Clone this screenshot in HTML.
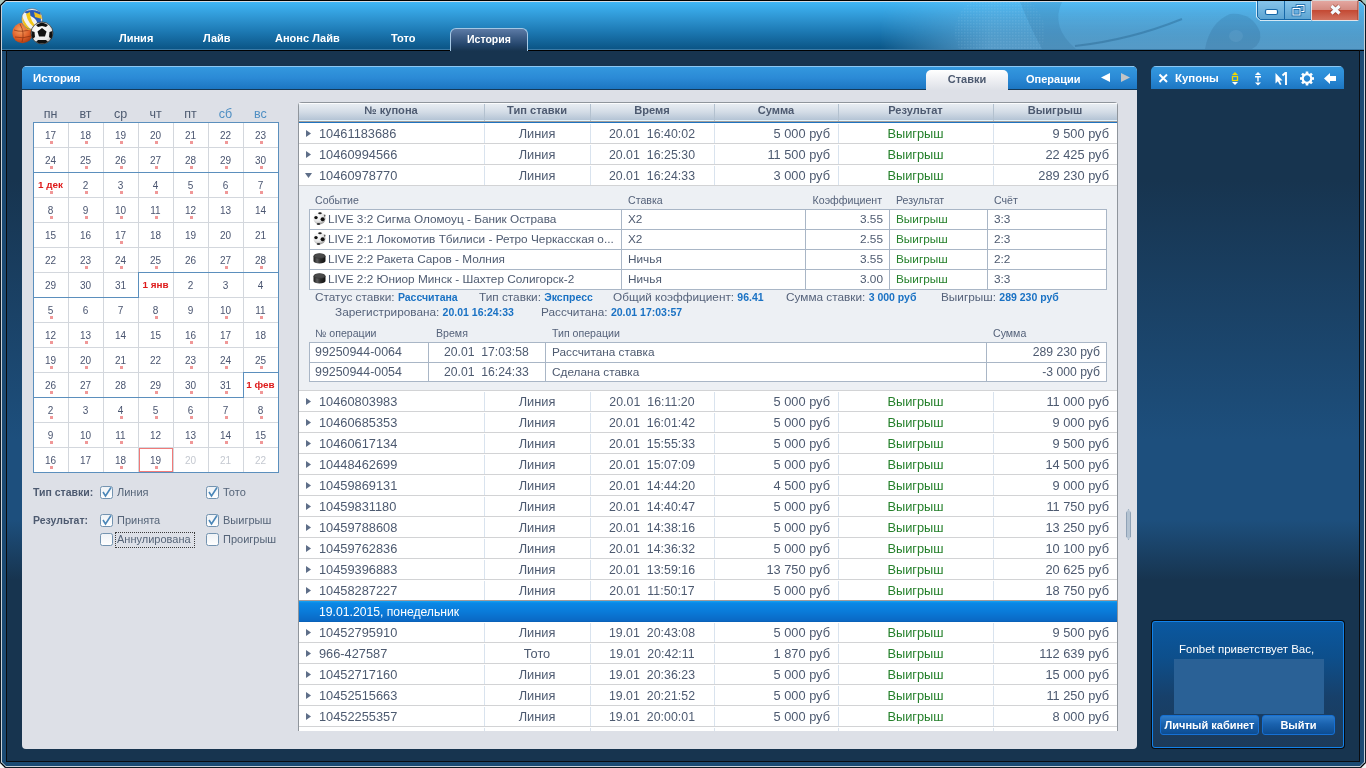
<!DOCTYPE html>
<html><head><meta charset="utf-8">
<style>
*{margin:0;padding:0;box-sizing:border-box}
html,body{-webkit-font-smoothing:antialiased;width:1366px;height:768px;overflow:hidden;background:#0e1a26;font-family:"Liberation Sans",sans-serif}
.a{position:absolute}
#frame{will-change:transform;position:absolute;left:0;top:0;width:1366px;height:768px;background:linear-gradient(#17344f 0,#17344f 180px,#1d4f7d 440px,#1d4f7d 520px,#17344f 580px,#17344f 768px)}
#hdr{position:absolute;left:0;top:0;width:1366px;height:51px;background:linear-gradient(#000 0,#000 1px,#d4dce4 1px,#d4dce4 2px,#3fb6f6 2px,#2e95d2 18px,#1c78b2 32px,#0b5586 49px,#3a7aa6 49px,#3a7aa6 50px,#000 50px,#000 51px)}
.nav{position:absolute;top:32px;font-weight:bold;font-size:11px;color:#fff;line-height:13px}
/* panel */
#panel{position:absolute;left:22px;top:66px;width:1115px;height:683px;background:#dde0e7;border-radius:5px 5px 4px 4px;overflow:hidden}
#ph{position:absolute;left:0;top:0;width:1115px;height:24px;background:linear-gradient(#8cc8f4 0,#8cc8f4 1px,#3398de 1px,#2b8ad6 12px,#1c76c2 23px,#143a5a 23px,#143a5a 24px)}
.ptitle{position:absolute;left:11px;top:6px;font-weight:bold;font-size:11.4px;color:#fff;line-height:13px}
/* calendar */
#cal{position:absolute;left:33px;top:122px;width:246px;height:351px;background:#fff}
.wd{position:absolute;top:107px;width:35px;text-align:center;font-size:12.5px;color:#4d5a70;line-height:14px}
.gv{position:absolute;top:0;width:1px;height:351px;background:#d3d7dd}
.gh{position:absolute;left:0;height:1px;width:246px;background:#d3d7dd}
.cd{position:absolute;width:35px;height:25px;text-align:center;font-size:10px;color:#4a5570;line-height:12px;padding-top:8px}
.cd.m{color:#de1a1a;font-size:9.9px;font-weight:bold;padding-top:7px}
.dt{position:absolute;width:3px;height:3px;background:#f09898}
.bl{position:absolute;background:#5b8fbd}
.lbl{position:absolute;font-weight:bold;font-size:10.5px;color:#4d5a70;line-height:13px}
.cb{position:absolute;width:13px;height:13px;border:1px solid #7f98b0;border-radius:2px;background:linear-gradient(#f4f6f9,#fff)}
.cbt{position:absolute;font-size:11.5px;color:#4d5a70;line-height:13px}

/* tabs */
.tab{position:absolute;left:926px;top:70px;width:82px;height:20px;border-radius:5px 5px 0 0;background:linear-gradient(#ffffff,#dde0e7);text-align:center;font-weight:bold;font-size:11px;color:#4d5a70;line-height:14px;padding-top:2px}
.tab2{position:absolute;left:1026px;top:72px;font-weight:bold;font-size:11px;color:#fff;line-height:14px}
.tri{position:absolute;width:9px;height:9px}
/* main table */
#tb{position:absolute;left:298px;top:102px;width:820px;height:629px;background:#fff;border:1px solid #8f959c;border-bottom:none;border-radius:4px 4px 0 0;overflow:hidden}
#th{position:absolute;left:299px;top:103px;width:818px;height:20px;background:linear-gradient(#fbfcfd 0,#fbfcfd 1px,#e8edf2 1px,#d3dce6 9px,#b4c4d5 17px,#e2f4fc 17px,#e2f4fc 18px,#a29d9a 18px,#a29d9a 19px,#1f74c0 19px,#1f74c0 20px)}
.hs{position:absolute;top:104px;width:1px;height:17px;background:#b3c1cf}
.hc{position:absolute;top:104px;text-align:center;font-weight:bold;font-size:11.1px;color:#4d5a70;line-height:13px}
.r{position:absolute;left:299px;width:818px;height:21px;border-bottom:1px solid #d2d3d5;background:#fff linear-gradient(#d9e3ee,#d9e3ee) no-repeat 185px 1px/1px 19px}
.r::before{content:"";position:absolute;left:0;top:0;width:818px;height:20px;background:linear-gradient(#d9e3ee,#d9e3ee) no-repeat 291px 1px/1px 19px,linear-gradient(#d9e3ee,#d9e3ee) no-repeat 415px 1px/1px 19px,linear-gradient(#d9e3ee,#d9e3ee) no-repeat 539px 1px/1px 19px,linear-gradient(#d9e3ee,#d9e3ee) no-repeat 694px 1px/1px 19px}
.r span{position:absolute;top:4px;font-size:12.8px;color:#4d5a70;line-height:14px;white-space:pre}
.c1{left:20px}
.c2{left:185px;width:106px;text-align:center}
.c3{left:291px;width:124px;text-align:center;font-size:12.3px!important;letter-spacing:.05px}
.c4{left:415px;width:116px;text-align:right}
.r .c5{left:539px;width:155px;text-align:center;color:#25802b}
.c6{left:694px;width:116px;text-align:right}
.ar{position:absolute;left:7px;top:7px;width:5px;height:7px;background:#5e6e88;clip-path:polygon(0 0,100% 50%,0 100%)}
.ad{position:absolute;left:6px;top:8px;width:7px;height:5px;background:#5e6e88;clip-path:polygon(0 0,100% 0,50% 100%)}
#exp{position:absolute;left:299px;top:186px;width:818px;height:205px;background:#edf0f4;border-bottom:1px solid #d2d3d5}
#grp{position:absolute;left:299px;top:600px;width:818px;height:22px;background:linear-gradient(#a39c9c 0,#a39c9c 1px,#14a4f4 1px,#0a88e6 3px,#0a7ad8 12px,#0a68c4 21px,#0a5cae 22px);color:#fff;font-size:12.2px;line-height:14px;padding:5px 0 0 20px}
.eh{position:absolute;font-size:10.6px;color:#55627a;line-height:13px;white-space:pre}
.et{position:absolute;font-size:11.8px;color:#4d5a70;line-height:14px;white-space:pre}
.it{position:absolute;background:#fff;border:1px solid #a9b6c6}
.ih{position:absolute;height:1px;background:#a9b6c6}
.iv{position:absolute;width:1px;background:#a9b6c6}
.sm{position:absolute;font-size:11.8px;color:#55627a;line-height:13px;white-space:pre}
.sm b{color:#1a72c4;font-size:10.5px}
.ball,.puck{position:absolute;width:12px;height:12px}
.ball{border-radius:50%;background:radial-gradient(circle at 50% 50%,#222 0,#222 2px,transparent 2.5px),radial-gradient(circle at 15% 40%,#222 0,#222 1.5px,transparent 2px),radial-gradient(circle at 85% 40%,#222 0,#222 1.5px,transparent 2px),radial-gradient(circle at 50% 95%,#333 0,#333 2px,transparent 2.5px),radial-gradient(circle at 40% 30%,#fff,#ccc);box-shadow:inset 0 0 0 1px #999}
.puck{height:10px;top:0;border-radius:6px/3px;background:linear-gradient(#666 0,#444 3px,#111 5px,#333 10px)}
.sb{position:absolute;left:1126px;top:509px;width:5px;height:31px;background:#b4c3d2;border:1px solid #8fa2b6;clip-path:polygon(50% 0,100% 12%,100% 88%,50% 100%,0 88%,0 12%)}

.ntab{position:absolute;left:450px;top:28px;width:78px;height:23px;border:1px solid #a6c8e4;border-bottom:none;border-radius:6px 6px 0 0;background:linear-gradient(#5c7ba6 0,#3f5f88 8px,#24456b 16px,#17344f 22px);color:#fff;font-weight:bold;font-size:10.5px;line-height:13px;padding:4px 0 0 16px}
.cbm{position:absolute;width:13px;height:13px}
.cbt{position:absolute;font-size:11px;color:#556478;line-height:13px;white-space:pre}
#kb{position:absolute;left:1151px;top:66px;width:193px;height:23px;border-radius:5px 5px 0 0;background:linear-gradient(#8cc8f4 0,#8cc8f4 1px,#3398de 1px,#2b8ad6 12px,#1c76c2 23px)}
.kt{position:absolute;left:1175px;top:72px;font-weight:bold;font-size:11.4px;color:#fff;line-height:13px}
#wb{position:absolute;left:1152px;top:621px;width:192px;height:127px;border:1px solid #1282ea;border-radius:3px;box-shadow:0 0 0 1px #050a10;background:linear-gradient(#0a58a0 0,#0d4f8c 35px,#17406a 75px,#1d3a58 126px)}
.wt{position:absolute;left:1179px;top:643px;font-size:11.5px;color:#fff;line-height:13px;white-space:pre}
.wi{position:absolute;left:1174px;top:659px;width:150px;height:55px;background:#2a6196}
.btn{position:absolute;top:715px;height:20px;border:1px solid #1670d4;border-radius:3px;background:linear-gradient(#2f7dcb 0,#1a62ae 8px,#0b4a8e 19px);color:#fff;font-weight:bold;font-size:11px;line-height:14px;text-align:center;padding-top:2px}
.wbtn{position:absolute;top:1px;height:20px}
</style></head>
<body>
<svg width="0" height="0" style="position:absolute">
  <defs>
    <radialGradient id="bg1" cx=".35" cy=".3" r=".8"><stop offset="0" stop-color="#fff"/><stop offset=".55" stop-color="#e6e6e6"/><stop offset="1" stop-color="#8a8a8a"/></radialGradient>
    <linearGradient id="pk" x1="0" y1="0" x2="1" y2="0"><stop offset="0" stop-color="#1a1a1a"/><stop offset=".3" stop-color="#5a5a5a"/><stop offset=".6" stop-color="#2a2a2a"/><stop offset="1" stop-color="#111"/></linearGradient>
    <symbol id="ball" viewBox="0 0 13 13">
      <circle cx="6.5" cy="6.5" r="6" fill="url(#bg1)"/>
      <circle cx="9.6" cy="7.2" r="2" fill="#111"/>
      <circle cx="3" cy="5.6" r="1.7" fill="#111"/>
      <ellipse cx="7" cy="1.2" rx="1.8" ry="1" fill="#222"/>
      <ellipse cx="5.5" cy="12" rx="1.8" ry=".9" fill="#333"/>
      <ellipse cx="11.8" cy="3.6" rx=".6" ry="1.2" fill="#444"/>
    </symbol>
    <symbol id="puck" viewBox="0 0 13 13">
      <path d="M0.5 4 V9 A6 2.6 0 0 0 12.5 9 V4 Z" fill="url(#pk)"/>
      <ellipse cx="6.5" cy="4" rx="6" ry="2.8" fill="#3a3a3a"/>
      <ellipse cx="6.5" cy="3.8" rx="5" ry="2" fill="#4a4a4a"/>
    </symbol>
  </defs>
</svg>
<div id="frame">
  <div id="hdr"></div>
  <!-- frame borders -->
  <div class="a" style="left:0;top:0;width:1px;height:768px;background:#0e1a26"></div>
  <div class="a" style="left:1px;top:1px;width:1px;height:766px;background:#c8d0d8"></div>
  <div class="a" style="left:2px;top:51px;width:4px;height:715px;background:#1b4a73"></div>
  <div class="a" style="left:6px;top:50px;width:1px;height:712px;background:#0a0c10"></div>
  <div class="a" style="left:1359px;top:50px;width:1px;height:712px;background:#0a0c10"></div>
  <div class="a" style="left:1360px;top:51px;width:4px;height:715px;background:#1b4a73"></div>
  <div class="a" style="left:1364px;top:1px;width:1px;height:766px;background:#c8d0d8"></div>
  <div class="a" style="left:1365px;top:0;width:1px;height:768px;background:#0e1a26"></div>
  <div class="a" style="left:6px;top:761px;width:1354px;height:1px;background:#0a0c10"></div>
  <div class="a" style="left:2px;top:762px;width:1362px;height:4px;background:#1b4a73"></div>
  <div class="a" style="left:1px;top:766px;width:1364px;height:1px;background:#c8d0d8"></div>
  <div class="a" style="left:0;top:767px;width:1366px;height:1px;background:#0e1a26"></div>


  <!-- window corners -->
  <svg class="a" style="left:0;top:0" width="7" height="7"><path d="M0 0 H5.5 L0 5.5Z" fill="#a9c6bd"/><path d="M5.5 0.5 L0.5 5.5" stroke="#000" stroke-width="1.2"/><path d="M6 1.5 L1.5 6" stroke="#c9d5de" stroke-width="1"/></svg>
  <svg class="a" style="left:1359px;top:0" width="7" height="7"><path d="M7 0 H1.5 L7 5.5Z" fill="#a9c6bd"/><path d="M1.5 0.5 L6.5 5.5" stroke="#000" stroke-width="1.2"/><path d="M1 1.5 L5.5 6" stroke="#c9d5de" stroke-width="1"/></svg>
  <svg class="a" style="left:0;top:761px" width="7" height="7"><path d="M0 7 H5.5 L0 1.5Z" fill="#f4f4f4"/><path d="M0.5 1.5 L5.5 6.5" stroke="#000" stroke-width="1.2"/><path d="M1.5 1 L6 5.5" stroke="#c9d5de" stroke-width="1"/></svg>
  <svg class="a" style="left:1359px;top:761px" width="7" height="7"><path d="M7 7 H1.5 L7 1.5Z" fill="#f4f4f4"/><path d="M6.5 1.5 L1.5 6.5" stroke="#000" stroke-width="1.2"/><path d="M5.5 1 L1 5.5" stroke="#c9d5de" stroke-width="1"/></svg>
  <div class="nav" style="left:119px">Линия</div>
  <div class="nav" style="left:203px">Лайв</div>
  <div class="nav" style="left:275px">Анонс Лайв</div>
  <div class="nav" style="left:391px">Тото</div>


  <!-- header overlay (athletes image approximation) -->
  <div class="a" style="left:880px;top:2px;width:484px;height:47px;background:linear-gradient(rgba(150,210,245,.22),rgba(120,188,228,.52) 22px,rgba(108,175,218,.78));-webkit-mask-image:linear-gradient(90deg,transparent 0,#000 110px,#000 484px)"></div>
  <svg class="a" style="left:880px;top:2px" width="484" height="47">
    <defs>
      <radialGradient id="ball" cx=".5" cy=".5" r=".5"><stop offset="0" stop-color="rgba(175,222,250,.18)"/><stop offset=".85" stop-color="rgba(175,222,250,.12)"/><stop offset="1" stop-color="rgba(175,222,250,0)"/></radialGradient>
      <pattern id="dots" width="3" height="3" patternUnits="userSpaceOnUse"><rect width="1.5" height="1.5" fill="rgba(200,235,255,.10)"/></pattern>
    </defs>
    <ellipse cx="245" cy="26" rx="62" ry="46" fill="url(#ball)"/>
    <ellipse cx="120" cy="30" rx="45" ry="40" fill="url(#dots)"/>
    <path d="M195 44 Q250 38 302 17" stroke="rgba(25,80,120,.32)" stroke-width="2" fill="none"/>
    <path d="M140 0 Q150 25 162 47 L196 47 Q170 25 182 0Z" fill="rgba(20,65,105,.12)"/>
    <path d="M325 47 Q330 20 350 12 Q372 10 380 30 Q382 42 372 47Z" fill="rgba(20,65,105,.14)"/>
    <ellipse cx="356" cy="34" rx="7" ry="6" fill="rgba(180,220,245,.10)"/>
  </svg>
  <!-- window buttons -->
  <svg class="a" style="left:1255px;top:0" width="105" height="23">
    <defs>
      <linearGradient id="gb" x1="0" y1="0" x2="0" y2="1"><stop offset="0" stop-color="#86c4ea"/><stop offset="1" stop-color="#5aa2d0"/></linearGradient>
      <linearGradient id="gr" x1="0" y1="0" x2="0" y2="1"><stop offset="0" stop-color="#e4a8a2"/><stop offset=".47" stop-color="#d48a80"/><stop offset=".5" stop-color="#c44a34"/><stop offset="1" stop-color="#d27462"/></linearGradient>
    </defs>
    <path d="M1.5 1 V17 L5 20.5 H56 V1" fill="url(#gb)" stroke="#ffffff" stroke-opacity=".75"/>
    <path d="M2.5 1 V16.5 L5.5 19.5 H56 V1" fill="none" stroke="#1668a8"/>
    <line x1="29.5" y1="1" x2="29.5" y2="20" stroke="#1668a8"/>
    <rect x="56.5" y="0.5" width="47" height="20" rx="1" fill="url(#gr)" stroke="#ffffff" stroke-opacity=".75"/>
    <rect x="102.5" y="1" width="1" height="19" fill="#9a3a2a"/>
    <rect x="10.5" y="9.5" width="12" height="5" rx="1.5" fill="#fff" stroke="#1668a8" stroke-width="1.2"/>
    <rect x="42" y="5.5" width="7" height="6" fill="none" stroke="#1668a8" stroke-width="2.6"/>
    <rect x="42" y="5.5" width="7" height="6" fill="none" stroke="#fff" stroke-width="1"/>
    <rect x="38" y="8.5" width="7" height="6.5" fill="#6aaede" stroke="#1668a8" stroke-width="2.6"/>
    <rect x="38" y="8.5" width="7" height="6.5" fill="none" stroke="#fff" stroke-width="1"/>
    <path d="M76.5 6 L84.5 13.5 M84.5 6 L76.5 13.5" stroke="#8a3a2a" stroke-width="5" stroke-opacity=".6"/>
    <path d="M76.5 6 L84.5 13.5 M84.5 6 L76.5 13.5" stroke="#f4fbff" stroke-width="3.2"/>
  </svg>
  <!-- logo -->
  <svg class="a" style="left:10px;top:6px" width="48" height="40">
    <defs>
      <radialGradient id="bk" cx=".4" cy=".35" r=".7"><stop offset="0" stop-color="#f7a060"/><stop offset=".6" stop-color="#e0602a"/><stop offset="1" stop-color="#a83a10"/></radialGradient>
      <radialGradient id="sc" cx=".4" cy=".35" r=".75"><stop offset="0" stop-color="#ffffff"/><stop offset=".7" stop-color="#e8e8e8"/><stop offset="1" stop-color="#9a9a9a"/></radialGradient>
    </defs>
    <circle cx="12.5" cy="27" r="10.2" fill="url(#bk)"/>
    <path d="M4 24 Q12 27 21 23 M5 31 Q13 33 21 30 M10 18 Q15 27 12 36" stroke="#8a3010" stroke-width=".7" fill="none"/>
    <circle cx="22" cy="13" r="10.5" fill="#f2f2f0"/>
    <path d="M14 6 Q22 2 30 6 Q32 12 30 18 L24 12 Z" fill="#2a5ab8"/>
    <path d="M12 10 Q16 20 22 24 L18 24 Q12 20 12 10 Z" fill="#f0c020"/>
    <path d="M26 12 L32 16 Q31 20 28 22 Z" fill="#2a5ab8"/>
    <path d="M16 8 Q18 18 26 22 L28 22 Q20 16 20 6 Z" fill="#f4c818"/>
    <path d="M24 6 L31 9 L32 13 L25 11 Z" fill="#f0c020"/>
    <circle cx="22" cy="13" r="10.5" fill="none" stroke="#5a6070" stroke-width=".6"/>
    <circle cx="32" cy="27" r="11" fill="url(#sc)" stroke="#333" stroke-width=".8"/>
    <polygon points="32,22 36.5,25.5 35,30.5 29,30.5 27.5,25.5" fill="#111"/>
    <path d="M32 16.5 Q35 17 38 19 L36 21 L32 20 L28 21 L26 19 Q29 17 32 16.5Z" fill="#111"/>
    <path d="M42.5 25 Q43 29 41.5 33 L39 31 L39.5 26Z" fill="#111"/>
    <path d="M21.5 25 Q21 29 22.5 33 L25 31 L24.5 26Z" fill="#111"/>
    <path d="M26 36 Q32 39 38 36 L36 34 H28Z" fill="#111"/>
  </svg>
  <div class="ntab">История</div>

  <!-- KUPONY -->
  <div id="kb"></div>
  <svg class="a" style="left:1157px;top:71px" width="182" height="16">
    <path d="M2.5 3.5 L10 11 M10 3.5 L2.5 11" stroke="#fff" stroke-width="2"/>
    <polygon points="78,1 81,4 75,4" fill="#f0d800"/>
    <rect x="75.5" y="5.5" width="5" height="4" fill="none" stroke="#f0d800" stroke-width="1.3"/>
    <polygon points="78,14 81,11 75,11" fill="#fff"/>
    <polygon points="101,1 104,4 98,4" fill="#fff"/>
    <path d="M98 5.7 H104 M101 5.7 V10.5" stroke="#fff" stroke-width="1.4"/>
    <polygon points="101,14.5 104,11.5 98,11.5" fill="#fff"/>
    <path d="M118.5 2 L118.5 12.5 L120.8 10.3 L123 14 L124.5 13.2 L122.5 9.5 L125.5 9.5 Z" fill="#fff"/>
    <path d="M125.5 4.5 L128.3 2 H129 V14" stroke="#fff" stroke-width="1.9" fill="none"/>
    <g transform="translate(150,7.5)" fill="#fff">
      <circle r="4.3" fill="none" stroke="#fff" stroke-width="2.2"/>
      <g id="tt"><rect x="-1.3" y="-7" width="2.6" height="3"/><rect x="-1.3" y="4" width="2.6" height="3"/><rect x="-7" y="-1.3" width="3" height="2.6"/><rect x="4" y="-1.3" width="3" height="2.6"/></g>
      <use href="#tt" transform="rotate(45)"/>
    </g>
    <path d="M167 7.5 L173 2 V5 H179 V10 H173 V13 Z" fill="#fff"/>
  </svg>
  <div class="kt">Купоны</div>

  <!-- WELCOME -->
  <div id="wb"></div>
  <div class="wt">Fonbet приветствует Вас,</div>
  <div class="wi"></div>
  <div class="btn" style="left:1160px;width:99px">Личный кабинет</div>
  <div class="btn" style="left:1262px;width:73px">Выйти</div>

  <!-- PANEL -->
  <div id="panel">
    <div id="ph"></div>
    <div class="ptitle">История</div>
  </div>

  <!-- CALENDAR -->
  <div class="wd" style="left:33px">пн</div>
  <div class="wd" style="left:68px">вт</div>
  <div class="wd" style="left:103px">ср</div>
  <div class="wd" style="left:138px">чт</div>
  <div class="wd" style="left:173px">пт</div>
  <div class="wd" style="left:208px;color:#4f8fc3">сб</div>
  <div class="wd" style="left:243px;color:#4f8fc3">вс</div>
  <div id="cal">
<div class="gv" style="left:35px"></div>
<div class="gv" style="left:70px"></div>
<div class="gv" style="left:105px"></div>
<div class="gv" style="left:140px"></div>
<div class="gv" style="left:175px"></div>
<div class="gv" style="left:210px"></div>
<div class="gh" style="top:25px"></div>
<div class="gh" style="top:50px"></div>
<div class="gh" style="top:75px"></div>
<div class="gh" style="top:100px"></div>
<div class="gh" style="top:125px"></div>
<div class="gh" style="top:150px"></div>
<div class="gh" style="top:175px"></div>
<div class="gh" style="top:200px"></div>
<div class="gh" style="top:225px"></div>
<div class="gh" style="top:250px"></div>
<div class="gh" style="top:275px"></div>
<div class="gh" style="top:300px"></div>
<div class="gh" style="top:325px"></div>
<div class="cd" style="left:0px;top:0px">17</div>
<div class="dt" style="left:17px;top:19px"></div>
<div class="cd" style="left:35px;top:0px">18</div>
<div class="dt" style="left:52px;top:19px"></div>
<div class="cd" style="left:70px;top:0px">19</div>
<div class="dt" style="left:87px;top:19px"></div>
<div class="cd" style="left:105px;top:0px">20</div>
<div class="dt" style="left:122px;top:19px"></div>
<div class="cd" style="left:140px;top:0px">21</div>
<div class="dt" style="left:157px;top:19px"></div>
<div class="cd" style="left:175px;top:0px">22</div>
<div class="dt" style="left:192px;top:19px"></div>
<div class="cd" style="left:210px;top:0px">23</div>
<div class="dt" style="left:227px;top:19px"></div>
<div class="cd" style="left:0px;top:25px">24</div>
<div class="dt" style="left:17px;top:44px"></div>
<div class="cd" style="left:35px;top:25px">25</div>
<div class="dt" style="left:52px;top:44px"></div>
<div class="cd" style="left:70px;top:25px">26</div>
<div class="dt" style="left:87px;top:44px"></div>
<div class="cd" style="left:105px;top:25px">27</div>
<div class="dt" style="left:122px;top:44px"></div>
<div class="cd" style="left:140px;top:25px">28</div>
<div class="dt" style="left:157px;top:44px"></div>
<div class="cd" style="left:175px;top:25px">29</div>
<div class="dt" style="left:192px;top:44px"></div>
<div class="cd" style="left:210px;top:25px">30</div>
<div class="dt" style="left:227px;top:44px"></div>
<div class="cd m" style="left:0px;top:50px">1 дек</div>
<div class="dt" style="left:17px;top:69px"></div>
<div class="cd" style="left:35px;top:50px">2</div>
<div class="dt" style="left:52px;top:69px"></div>
<div class="cd" style="left:70px;top:50px">3</div>
<div class="dt" style="left:87px;top:69px"></div>
<div class="cd" style="left:105px;top:50px">4</div>
<div class="dt" style="left:122px;top:69px"></div>
<div class="cd" style="left:140px;top:50px">5</div>
<div class="dt" style="left:157px;top:69px"></div>
<div class="cd" style="left:175px;top:50px">6</div>
<div class="dt" style="left:192px;top:69px"></div>
<div class="cd" style="left:210px;top:50px">7</div>
<div class="dt" style="left:227px;top:69px"></div>
<div class="cd" style="left:0px;top:75px">8</div>
<div class="dt" style="left:17px;top:94px"></div>
<div class="cd" style="left:35px;top:75px">9</div>
<div class="dt" style="left:52px;top:94px"></div>
<div class="cd" style="left:70px;top:75px">10</div>
<div class="dt" style="left:87px;top:94px"></div>
<div class="cd" style="left:105px;top:75px">11</div>
<div class="dt" style="left:122px;top:94px"></div>
<div class="cd" style="left:140px;top:75px">12</div>
<div class="dt" style="left:157px;top:94px"></div>
<div class="cd" style="left:175px;top:75px">13</div>
<div class="cd" style="left:210px;top:75px">14</div>
<div class="cd" style="left:0px;top:100px">15</div>
<div class="cd" style="left:35px;top:100px">16</div>
<div class="cd" style="left:70px;top:100px">17</div>
<div class="dt" style="left:87px;top:119px"></div>
<div class="cd" style="left:105px;top:100px">18</div>
<div class="cd" style="left:140px;top:100px">19</div>
<div class="cd" style="left:175px;top:100px">20</div>
<div class="cd" style="left:210px;top:100px">21</div>
<div class="cd" style="left:0px;top:125px">22</div>
<div class="cd" style="left:35px;top:125px">23</div>
<div class="dt" style="left:52px;top:144px"></div>
<div class="cd" style="left:70px;top:125px">24</div>
<div class="dt" style="left:87px;top:144px"></div>
<div class="cd" style="left:105px;top:125px">25</div>
<div class="dt" style="left:122px;top:144px"></div>
<div class="cd" style="left:140px;top:125px">26</div>
<div class="cd" style="left:175px;top:125px">27</div>
<div class="dt" style="left:192px;top:144px"></div>
<div class="cd" style="left:210px;top:125px">28</div>
<div class="dt" style="left:227px;top:144px"></div>
<div class="cd" style="left:0px;top:150px">29</div>
<div class="cd" style="left:35px;top:150px">30</div>
<div class="cd" style="left:70px;top:150px">31</div>
<div class="cd m" style="left:105px;top:150px">1 янв</div>
<div class="cd" style="left:140px;top:150px">2</div>
<div class="cd" style="left:175px;top:150px">3</div>
<div class="cd" style="left:210px;top:150px">4</div>
<div class="cd" style="left:0px;top:175px">5</div>
<div class="dt" style="left:17px;top:194px"></div>
<div class="cd" style="left:35px;top:175px">6</div>
<div class="cd" style="left:70px;top:175px">7</div>
<div class="cd" style="left:105px;top:175px">8</div>
<div class="dt" style="left:122px;top:194px"></div>
<div class="cd" style="left:140px;top:175px">9</div>
<div class="cd" style="left:175px;top:175px">10</div>
<div class="dt" style="left:192px;top:194px"></div>
<div class="cd" style="left:210px;top:175px">11</div>
<div class="dt" style="left:227px;top:194px"></div>
<div class="cd" style="left:0px;top:200px">12</div>
<div class="dt" style="left:17px;top:219px"></div>
<div class="cd" style="left:35px;top:200px">13</div>
<div class="dt" style="left:52px;top:219px"></div>
<div class="cd" style="left:70px;top:200px">14</div>
<div class="cd" style="left:105px;top:200px">15</div>
<div class="cd" style="left:140px;top:200px">16</div>
<div class="dt" style="left:157px;top:219px"></div>
<div class="cd" style="left:175px;top:200px">17</div>
<div class="dt" style="left:192px;top:219px"></div>
<div class="cd" style="left:210px;top:200px">18</div>
<div class="cd" style="left:0px;top:225px">19</div>
<div class="dt" style="left:17px;top:244px"></div>
<div class="cd" style="left:35px;top:225px">20</div>
<div class="dt" style="left:52px;top:244px"></div>
<div class="cd" style="left:70px;top:225px">21</div>
<div class="dt" style="left:87px;top:244px"></div>
<div class="cd" style="left:105px;top:225px">22</div>
<div class="cd" style="left:140px;top:225px">23</div>
<div class="dt" style="left:157px;top:244px"></div>
<div class="cd" style="left:175px;top:225px">24</div>
<div class="dt" style="left:192px;top:244px"></div>
<div class="cd" style="left:210px;top:225px">25</div>
<div class="dt" style="left:227px;top:244px"></div>
<div class="cd" style="left:0px;top:250px">26</div>
<div class="dt" style="left:17px;top:269px"></div>
<div class="cd" style="left:35px;top:250px">27</div>
<div class="dt" style="left:52px;top:269px"></div>
<div class="cd" style="left:70px;top:250px">28</div>
<div class="cd" style="left:105px;top:250px">29</div>
<div class="dt" style="left:122px;top:269px"></div>
<div class="cd" style="left:140px;top:250px">30</div>
<div class="dt" style="left:157px;top:269px"></div>
<div class="cd" style="left:175px;top:250px">31</div>
<div class="dt" style="left:192px;top:269px"></div>
<div class="cd m" style="left:210px;top:250px">1 фев</div>
<div class="dt" style="left:227px;top:269px"></div>
<div class="cd" style="left:0px;top:275px">2</div>
<div class="dt" style="left:17px;top:294px"></div>
<div class="cd" style="left:35px;top:275px">3</div>
<div class="cd" style="left:70px;top:275px">4</div>
<div class="dt" style="left:87px;top:294px"></div>
<div class="cd" style="left:105px;top:275px">5</div>
<div class="dt" style="left:122px;top:294px"></div>
<div class="cd" style="left:140px;top:275px">6</div>
<div class="dt" style="left:157px;top:294px"></div>
<div class="cd" style="left:175px;top:275px">7</div>
<div class="dt" style="left:192px;top:294px"></div>
<div class="cd" style="left:210px;top:275px">8</div>
<div class="dt" style="left:227px;top:294px"></div>
<div class="cd" style="left:0px;top:300px">9</div>
<div class="dt" style="left:17px;top:319px"></div>
<div class="cd" style="left:35px;top:300px">10</div>
<div class="dt" style="left:52px;top:319px"></div>
<div class="cd" style="left:70px;top:300px">11</div>
<div class="dt" style="left:87px;top:319px"></div>
<div class="cd" style="left:105px;top:300px">12</div>
<div class="cd" style="left:140px;top:300px">13</div>
<div class="dt" style="left:157px;top:319px"></div>
<div class="cd" style="left:175px;top:300px">14</div>
<div class="dt" style="left:192px;top:319px"></div>
<div class="cd" style="left:210px;top:300px">15</div>
<div class="dt" style="left:227px;top:319px"></div>
<div class="cd" style="left:0px;top:325px">16</div>
<div class="dt" style="left:17px;top:344px"></div>
<div class="cd" style="left:35px;top:325px">17</div>
<div class="cd" style="left:70px;top:325px">18</div>
<div class="dt" style="left:87px;top:344px"></div>
<div class="cd" style="left:105px;top:325px">19</div>
<div class="dt" style="left:122px;top:344px"></div>
<div class="cd" style="left:140px;top:325px;color:#c4c8d0">20</div>
<div class="cd" style="left:175px;top:325px;color:#c4c8d0">21</div>
<div class="cd" style="left:210px;top:325px;color:#c4c8d0">22</div>
<div class="bl" style="left:0px;top:0px;width:246px;height:1px"></div>
<div class="bl" style="left:0px;top:350px;width:246px;height:1px"></div>
<div class="bl" style="left:0px;top:0px;width:1px;height:351px"></div>
<div class="bl" style="left:245px;top:0px;width:1px;height:351px"></div>
<div class="bl" style="left:0px;top:50px;width:246px;height:1px"></div>
<div class="bl" style="left:105px;top:150px;width:141px;height:1px"></div>
<div class="bl" style="left:105px;top:150px;width:1px;height:25px"></div>
<div class="bl" style="left:0px;top:175px;width:106px;height:1px"></div>
<div class="bl" style="left:210px;top:250px;width:36px;height:1px"></div>
<div class="bl" style="left:210px;top:250px;width:1px;height:25px"></div>
<div class="bl" style="left:0px;top:275px;width:211px;height:1px"></div>
<div class="a" style="left:106px;top:326px;width:34px;height:24px;border:1px solid #f07a78"></div>
  </div>


  <!-- TABS -->
  <div class="tab">Ставки</div>
  <div class="tab2">Операции</div>
  <svg class="a" style="left:1101px;top:73px" width="10" height="10"><polygon points="0,4.5 9,0 9,9" fill="#fff"/></svg>
  <svg class="a" style="left:1121px;top:73px" width="10" height="10"><polygon points="0,0 9,4.5 0,9" fill="#c2c4c6"/></svg>

  <!-- TABLE -->
  <div id="tb"></div>
  <div id="th"></div>
  <div class="hs" style="left:484px"></div>
  <div class="hs" style="left:590px"></div>
  <div class="hs" style="left:714px"></div>
  <div class="hs" style="left:838px"></div>
  <div class="hs" style="left:993px"></div>
  <div class="hc" style="left:298px;width:186px">№ купона</div>
  <div class="hc" style="left:484px;width:106px">Тип ставки</div>
  <div class="hc" style="left:590px;width:124px">Время</div>
  <div class="hc" style="left:714px;width:124px">Сумма</div>
  <div class="hc" style="left:838px;width:155px">Результат</div>
  <div class="hc" style="left:993px;width:124px">Выигрыш</div>
  <div class="a" style="left:299px;top:123px;width:818px;height:608px;overflow:hidden">
    <div class="a" style="left:-299px;top:-123px;width:1366px;height:768px">
<div class="r" style="top:123px">
<i class="ar"></i>
<span class="c1">10461183686</span><span class="c2">Линия</span><span class="c3">20.01  16:40:02</span><span class="c4">5 000 руб</span><span class="c5">Выигрыш</span><span class="c6">9 500 руб</span>
</div>
<div class="r" style="top:144px">
<i class="ar"></i>
<span class="c1">10460994566</span><span class="c2">Линия</span><span class="c3">20.01  16:25:30</span><span class="c4">11 500 руб</span><span class="c5">Выигрыш</span><span class="c6">22 425 руб</span>
</div>
<div class="r" style="top:165px">
<i class="ad"></i>
<span class="c1">10460978770</span><span class="c2">Линия</span><span class="c3">20.01  16:24:33</span><span class="c4">3 000 руб</span><span class="c5">Выигрыш</span><span class="c6">289 230 руб</span>
</div>
<div id="exp"></div>
<div class="r" style="top:391px">
<i class="ar"></i>
<span class="c1">10460803983</span><span class="c2">Линия</span><span class="c3">20.01  16:11:20</span><span class="c4">5 000 руб</span><span class="c5">Выигрыш</span><span class="c6">11 000 руб</span>
</div>
<div class="r" style="top:412px">
<i class="ar"></i>
<span class="c1">10460685353</span><span class="c2">Линия</span><span class="c3">20.01  16:01:42</span><span class="c4">5 000 руб</span><span class="c5">Выигрыш</span><span class="c6">9 000 руб</span>
</div>
<div class="r" style="top:433px">
<i class="ar"></i>
<span class="c1">10460617134</span><span class="c2">Линия</span><span class="c3">20.01  15:55:33</span><span class="c4">5 000 руб</span><span class="c5">Выигрыш</span><span class="c6">9 500 руб</span>
</div>
<div class="r" style="top:454px">
<i class="ar"></i>
<span class="c1">10448462699</span><span class="c2">Линия</span><span class="c3">20.01  15:07:09</span><span class="c4">5 000 руб</span><span class="c5">Выигрыш</span><span class="c6">14 500 руб</span>
</div>
<div class="r" style="top:475px">
<i class="ar"></i>
<span class="c1">10459869131</span><span class="c2">Линия</span><span class="c3">20.01  14:44:20</span><span class="c4">4 500 руб</span><span class="c5">Выигрыш</span><span class="c6">9 000 руб</span>
</div>
<div class="r" style="top:496px">
<i class="ar"></i>
<span class="c1">10459831180</span><span class="c2">Линия</span><span class="c3">20.01  14:40:47</span><span class="c4">5 000 руб</span><span class="c5">Выигрыш</span><span class="c6">11 750 руб</span>
</div>
<div class="r" style="top:517px">
<i class="ar"></i>
<span class="c1">10459788608</span><span class="c2">Линия</span><span class="c3">20.01  14:38:16</span><span class="c4">5 000 руб</span><span class="c5">Выигрыш</span><span class="c6">13 250 руб</span>
</div>
<div class="r" style="top:538px">
<i class="ar"></i>
<span class="c1">10459762836</span><span class="c2">Линия</span><span class="c3">20.01  14:36:32</span><span class="c4">5 000 руб</span><span class="c5">Выигрыш</span><span class="c6">10 100 руб</span>
</div>
<div class="r" style="top:559px">
<i class="ar"></i>
<span class="c1">10459396883</span><span class="c2">Линия</span><span class="c3">20.01  13:59:16</span><span class="c4">13 750 руб</span><span class="c5">Выигрыш</span><span class="c6">20 625 руб</span>
</div>
<div class="r" style="top:580px">
<i class="ar"></i>
<span class="c1">10458287227</span><span class="c2">Линия</span><span class="c3">20.01  11:50:17</span><span class="c4">5 000 руб</span><span class="c5">Выигрыш</span><span class="c6">18 750 руб</span>
</div>
<div id="grp">19.01.2015, понедельник</div>
<div class="r" style="top:622px">
<i class="ar"></i>
<span class="c1">10452795910</span><span class="c2">Линия</span><span class="c3">19.01  20:43:08</span><span class="c4">5 000 руб</span><span class="c5">Выигрыш</span><span class="c6">9 500 руб</span>
</div>
<div class="r" style="top:643px">
<i class="ar"></i>
<span class="c1">966-427587</span><span class="c2">Тото</span><span class="c3">19.01  20:42:11</span><span class="c4">1 870 руб</span><span class="c5">Выигрыш</span><span class="c6">112 639 руб</span>
</div>
<div class="r" style="top:664px">
<i class="ar"></i>
<span class="c1">10452717160</span><span class="c2">Линия</span><span class="c3">19.01  20:36:23</span><span class="c4">5 000 руб</span><span class="c5">Выигрыш</span><span class="c6">15 000 руб</span>
</div>
<div class="r" style="top:685px">
<i class="ar"></i>
<span class="c1">10452515663</span><span class="c2">Линия</span><span class="c3">19.01  20:21:52</span><span class="c4">5 000 руб</span><span class="c5">Выигрыш</span><span class="c6">11 250 руб</span>
</div>
<div class="r" style="top:706px">
<i class="ar"></i>
<span class="c1">10452255357</span><span class="c2">Линия</span><span class="c3">19.01  20:00:01</span><span class="c4">5 000 руб</span><span class="c5">Выигрыш</span><span class="c6">8 000 руб</span>
</div>
<div class="r" style="top:727px">
</div>
<div class="eh" style="left:315px;top:194px">Событие</div>
<div class="eh" style="left:628px;top:194px">Ставка</div>
<div class="eh" style="left:800px;top:194px;width:82px;text-align:right">Коэффициент</div>
<div class="eh" style="left:896px;top:194px">Результат</div>
<div class="eh" style="left:994px;top:194px">Счёт</div>
<div class="it" style="left:309px;top:209px;width:798px;height:81px"></div>
<div class="ih" style="left:309px;top:229px;width:798px"></div>
<div class="ih" style="left:309px;top:249px;width:798px"></div>
<div class="ih" style="left:309px;top:269px;width:798px"></div>
<div class="iv" style="left:621px;top:210px;height:79px"></div>
<div class="iv" style="left:805px;top:210px;height:79px"></div>
<div class="iv" style="left:889px;top:210px;height:79px"></div>
<div class="iv" style="left:987px;top:210px;height:79px"></div>
<svg class="a" style="left:313px;top:212px" width="13" height="13"><use href="#ball"/></svg>
<div class="et" style="left:328px;top:212px">LIVE 3:2 Сигма Оломоуц - Баник Острава</div>
<div class="et" style="left:628px;top:212px">X2</div>
<div class="et" style="left:806px;top:212px;width:77px;text-align:right">3.55</div>
<div class="et" style="left:896px;top:212px;color:#25802b">Выигрыш</div>
<div class="et" style="left:994px;top:212px">3:3</div>
<svg class="a" style="left:313px;top:232px" width="13" height="13"><use href="#ball"/></svg>
<div class="et" style="left:328px;top:232px">LIVE 2:1 Локомотив Тбилиси - Ретро Черкасская о...</div>
<div class="et" style="left:628px;top:232px">X2</div>
<div class="et" style="left:806px;top:232px;width:77px;text-align:right">2.55</div>
<div class="et" style="left:896px;top:232px;color:#25802b">Выигрыш</div>
<div class="et" style="left:994px;top:232px">2:3</div>
<svg class="a" style="left:313px;top:252px" width="13" height="13"><use href="#puck"/></svg>
<div class="et" style="left:328px;top:252px">LIVE 2:2 Ракета Саров - Молния</div>
<div class="et" style="left:628px;top:252px">Ничья</div>
<div class="et" style="left:806px;top:252px;width:77px;text-align:right">3.55</div>
<div class="et" style="left:896px;top:252px;color:#25802b">Выигрыш</div>
<div class="et" style="left:994px;top:252px">2:2</div>
<svg class="a" style="left:313px;top:272px" width="13" height="13"><use href="#puck"/></svg>
<div class="et" style="left:328px;top:272px">LIVE 2:2 Юниор Минск - Шахтер Солигорск-2</div>
<div class="et" style="left:628px;top:272px">Ничья</div>
<div class="et" style="left:806px;top:272px;width:77px;text-align:right">3.00</div>
<div class="et" style="left:896px;top:272px;color:#25802b">Выигрыш</div>
<div class="et" style="left:994px;top:272px">3:3</div>
<div class="sm" style="left:315px;top:291px">Статус ставки: <b>Рассчитана</b></div>
<div class="sm" style="left:479px;top:291px">Тип ставки: <b>Экспресс</b></div>
<div class="sm" style="left:613px;top:291px">Общий коэффициент: <b>96.41</b></div>
<div class="sm" style="left:786px;top:291px">Сумма ставки: <b>3 000 руб</b></div>
<div class="sm" style="left:941px;top:291px">Выигрыш: <b>289 230 руб</b></div>
<div class="sm" style="left:335px;top:306px">Зарегистрирована: <b>20.01 16:24:33</b></div>
<div class="sm" style="left:541px;top:306px">Рассчитана: <b>20.01 17:03:57</b></div>
<div class="eh" style="left:315px;top:327px">№ операции</div>
<div class="eh" style="left:436px;top:327px">Время</div>
<div class="eh" style="left:552px;top:327px">Тип операции</div>
<div class="eh" style="left:993px;top:327px">Сумма</div>
<div class="it" style="left:309px;top:342px;width:798px;height:40px"></div>
<div class="ih" style="left:309px;top:362px;width:798px"></div>
<div class="iv" style="left:428px;top:343px;height:38px"></div>
<div class="iv" style="left:545px;top:343px;height:38px"></div>
<div class="iv" style="left:986px;top:343px;height:38px"></div>
<div class="et" style="left:315px;top:345px;font-size:12.4px">99250944-0064</div>
<div class="et" style="left:444px;top:345px;font-size:12.2px">20.01  17:03:58</div>
<div class="et" style="left:552px;top:345px">Рассчитана ставка</div>
<div class="et" style="left:987px;top:345px;width:113px;text-align:right;font-size:12.2px">289 230 руб</div>
<div class="et" style="left:315px;top:365px;font-size:12.4px">99250944-0054</div>
<div class="et" style="left:444px;top:365px;font-size:12.2px">20.01  16:24:33</div>
<div class="et" style="left:552px;top:365px">Сделана ставка</div>
<div class="et" style="left:987px;top:365px;width:113px;text-align:right;font-size:12.2px">-3 000 руб</div>
    </div>
  </div>
  <div class="sb"></div>

  <!-- FILTERS -->
  <div class="lbl" style="left:33px;top:486px">Тип ставки:</div>
  <div class="lbl" style="left:33px;top:514px">Результат:</div>
  <svg class="a" style="left:99px;top:485px" width="125" height="63">
    <defs><linearGradient id="cg" x1="0" y1="0" x2="0" y2="1"><stop offset="0" stop-color="#eef2f6"/><stop offset="1" stop-color="#ffffff"/></linearGradient></defs>
    <g fill="url(#cg)" stroke="#7393b0">
      <rect x="1.5" y="1.5" width="12" height="12" rx="2"/>
      <rect x="107.5" y="1.5" width="12" height="12" rx="2"/>
      <rect x="1.5" y="29.5" width="12" height="12" rx="2"/>
      <rect x="107.5" y="29.5" width="12" height="12" rx="2"/>
      <rect x="1.5" y="48.5" width="12" height="12" rx="2"/>
      <rect x="107.5" y="48.5" width="12" height="12" rx="2"/>
    </g>
    <g stroke="#4a86b8" stroke-width="1.6" fill="none">
      <path d="M4 7 L6.5 11 L12 2.5"/>
      <path d="M110 7 L112.5 11 L118 2.5"/>
      <path d="M4 35 L6.5 39 L12 30.5"/>
      <path d="M110 35 L112.5 39 L118 30.5"/>
    </g>
    
  </svg>
  <div class="cbt" style="left:117px;top:486px">Линия</div>
  <div class="cbt" style="left:223px;top:486px">Тото</div>
  <div class="cbt" style="left:117px;top:514px">Принята</div>
  <div class="cbt" style="left:223px;top:514px">Выигрыш</div>
  <div class="a" style="left:115px;top:532px;width:80px;height:16px;border:1px dotted #3a3a3a"></div>
  <div class="cbt" style="left:117px;top:533px">Аннулирована</div>
  <div class="cbt" style="left:223px;top:533px">Проигрыш</div>

</div>
</body></html>
